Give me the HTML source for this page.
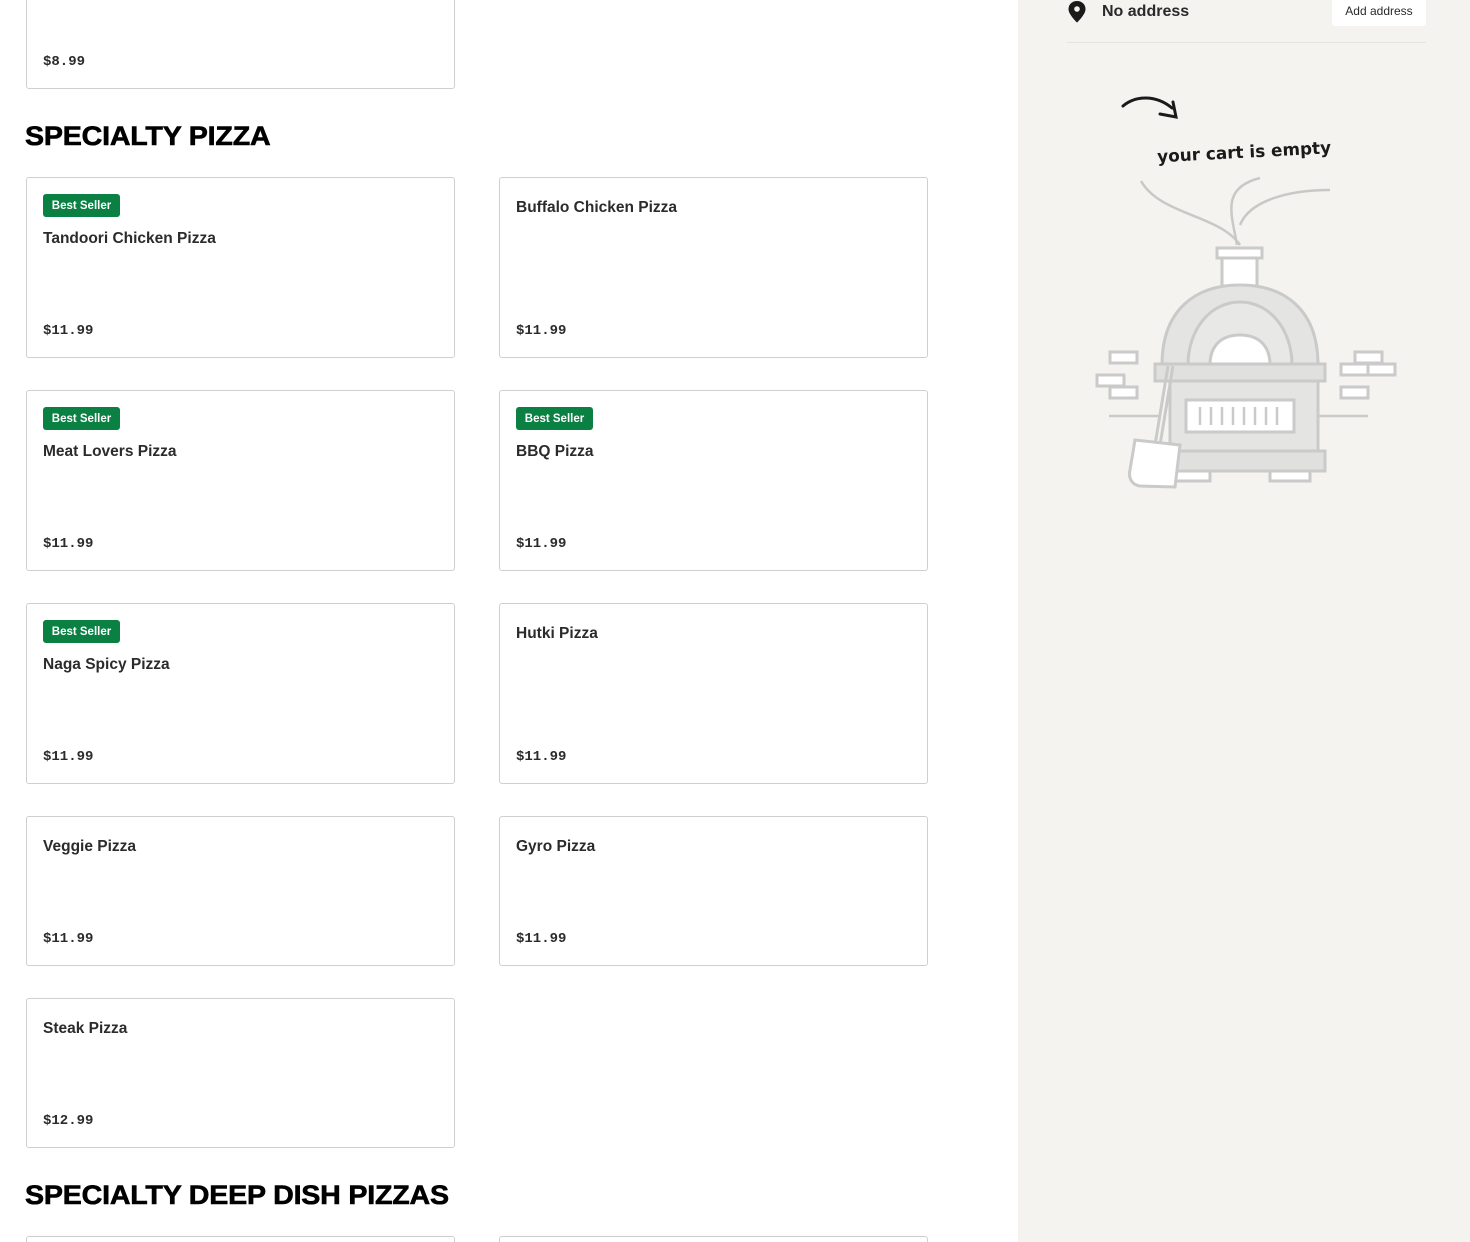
<!DOCTYPE html>
<html style="height:1242px;overflow:hidden"><head><meta charset="utf-8"><style>
*{box-sizing:border-box;margin:0;padding:0}
body{width:1470px;height:1242px;overflow:hidden;background:#fff;font-family:"Liberation Sans",sans-serif;color:#2a2a2a;position:relative}
.card{position:absolute;width:429px;border:1px solid #cfcfcf;border-radius:3px;background:#fff}
.badge{position:absolute;left:16px;top:16px;height:23px;width:77px;background:#0a8043;color:#fff;font-size:11.5px;font-weight:bold;border-radius:3px;line-height:24px;text-align:center}
.t{position:absolute;left:16px;font-size:15.5px;font-weight:bold;color:#2b2b2b}
.p{position:absolute;left:16px;bottom:18px;font-family:"Liberation Mono",monospace;font-size:14px;font-weight:bold;color:#2b2b2b}
h2{position:absolute;left:25px;font-size:27px;font-weight:900;color:#000;letter-spacing:-0.2px;transform:scaleX(1.06);transform-origin:left;-webkit-text-stroke:0.6px #000}
.side{position:absolute;left:1018px;top:0;width:452px;height:1242px;background:#f4f3f0}
</style></head><body>
<div class="card" style="left:26px;top:-20px;height:109px"><div class="p">$8.99</div></div>
<h2 style="top:121px">SPECIALTY PIZZA</h2>

<div class="card" style="left:26px;top:177px;height:181px"><div class="badge">Best Seller</div><div class="t" style="top:52px">Tandoori Chicken Pizza</div><div class="p">$11.99</div></div>
<div class="card" style="left:499px;top:177px;height:181px"><div class="t" style="top:21px">Buffalo Chicken Pizza</div><div class="p">$11.99</div></div>

<div class="card" style="left:26px;top:390px;height:181px"><div class="badge">Best Seller</div><div class="t" style="top:52px">Meat Lovers Pizza</div><div class="p">$11.99</div></div>
<div class="card" style="left:499px;top:390px;height:181px"><div class="badge">Best Seller</div><div class="t" style="top:52px">BBQ Pizza</div><div class="p">$11.99</div></div>

<div class="card" style="left:26px;top:603px;height:181px"><div class="badge">Best Seller</div><div class="t" style="top:52px">Naga Spicy Pizza</div><div class="p">$11.99</div></div>
<div class="card" style="left:499px;top:603px;height:181px"><div class="t" style="top:21px">Hutki Pizza</div><div class="p">$11.99</div></div>

<div class="card" style="left:26px;top:816px;height:150px"><div class="t" style="top:21px">Veggie Pizza</div><div class="p">$11.99</div></div>
<div class="card" style="left:499px;top:816px;height:150px"><div class="t" style="top:21px">Gyro Pizza</div><div class="p">$11.99</div></div>

<div class="card" style="left:26px;top:998px;height:150px"><div class="t" style="top:21px">Steak Pizza</div><div class="p">$12.99</div></div>

<h2 style="top:1180px">SPECIALTY DEEP DISH PIZZAS</h2>
<div class="card" style="left:26px;top:1236px;height:40px"></div>
<div class="card" style="left:499px;top:1236px;height:40px"></div>

<div class="side">
<svg style="position:absolute;left:50px;top:1px" width="18" height="22" viewBox="0 0 18 22"><path d="M9 0C4 0 0.5 3.5 0.5 8.2 0.5 13.5 9 21.5 9 21.5S17.5 13.5 17.5 8.2C17.5 3.5 14 0 9 0Z" fill="#1a1a1a"/><circle cx="9" cy="8" r="2.8" fill="#f4f3f0"/></svg>
<div style="position:absolute;left:84px;top:3px;font-size:16px;font-weight:bold;color:#2a2a2a">No address</div>
<div style="position:absolute;left:314px;top:-4px;width:94px;height:30px;background:#fff;border-radius:3px;font-size:12px;line-height:30px;text-align:center;color:#2a2a2a">Add address</div>
<div style="position:absolute;left:49px;top:42px;width:359px;height:1px;background:#e6e4df"></div>
<svg style="position:absolute;left:0;top:80px" width="452" height="420" viewBox="1018 80 452 420">
<path d="M1123 106C1135 96 1155 94 1172 108" fill="none" stroke="#1a1a1a" stroke-width="3" stroke-linecap="round"/>
<path d="M1160 114L1176 117 1173 102" fill="none" stroke="#1a1a1a" stroke-width="3" stroke-linecap="round"/>
<text x="1157" y="158" font-family="'Comic Sans MS','DejaVu Sans',sans-serif" font-size="17" font-weight="bold" fill="#1a1a1a" textLength="174" lengthAdjust="spacingAndGlyphs" transform="rotate(-3 1240 150)">your cart is empty</text>
<g fill="none" stroke="#c8c8c6" stroke-width="2.5">
<path d="M1141 181C1160 215 1220 215 1240 245"/>
<path d="M1260 178C1220 188 1232 215 1237 245"/>
<path d="M1330 190C1290 190 1250 200 1240 225"/>
</g>
<g fill="#fff" stroke="#cacaca" stroke-width="3">
<rect x="1217" y="248" width="45" height="10"/>
<rect x="1222" y="258" width="35" height="30"/>
<path d="M1162 365C1162 310 1195 285 1240 285 1285 285 1318 310 1318 365Z" fill="#e4e4e2"/>
<path d="M1188 365C1188 330 1210 302 1240 302 1270 302 1292 330 1292 365Z" fill="#e8e8e6"/>
<path d="M1210 365C1210 345 1222 335 1240 335 1258 335 1270 345 1270 365Z"/>
<rect x="1155" y="364" width="170" height="17" fill="#e0e0de"/>
<rect x="1170" y="381" width="148" height="70" fill="#e4e4e2"/>
<rect x="1186" y="400" width="108" height="32"/>
<rect x="1155" y="451" width="170" height="20" fill="#e0e0de"/>
<rect x="1175" y="471" width="35" height="10"/>
<rect x="1270" y="471" width="40" height="10"/>
<rect x="1110" y="352" width="27" height="11"/><rect x="1097" y="375" width="27" height="11"/><rect x="1110" y="387" width="27" height="11"/>
<rect x="1355" y="352" width="27" height="11"/><rect x="1341" y="364" width="27" height="11"/><rect x="1368" y="364" width="27" height="11"/><rect x="1341" y="387" width="27" height="11"/>
<path d="M1173 366L1160 445M1168 366L1155 445"/>
<path d="M1135 440L1180 445 1175 487 1140 486C1132 485 1128 478 1130 470Z"/>
</g>
<g stroke="#cacaca" stroke-width="2.5"><path d="M1109 416H1160M1318 416H1368"/>
<path d="M1200 407V425M1211 407V425M1222 407V425M1233 407V425M1244 407V425M1255 407V425M1266 407V425M1277 407V425"/></g>
</svg>
</div>
</body></html>
